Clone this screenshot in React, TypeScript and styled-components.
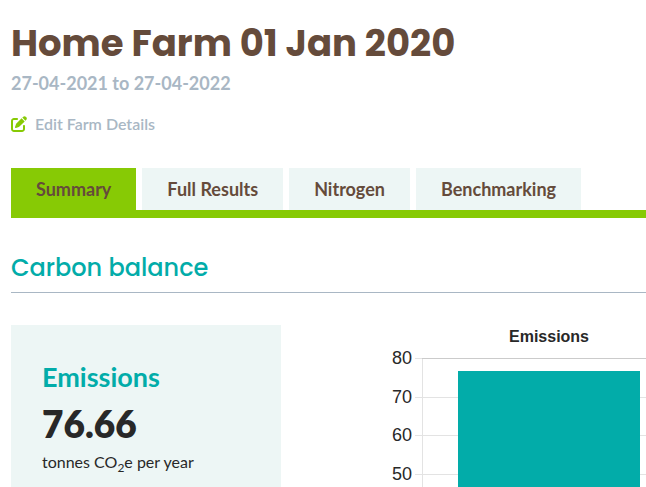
import React from "react";
import styled, { createGlobalStyle } from "styled-components";
import { FaPenToSquare } from "react-icons/fa6";

const color = {
  brown: "#654b3b",
  slate: "#a9b7c4",
  lime: "#87ca05",
  teal: "#02aca9",
  mist: "#edf6f5",
  ink: "#282828",
};

const bodyFont = `"Proxima Nova", Lato, sans-serif`;
const headingFont = `Poppins, Inter, sans-serif`;

const GlobalStyle = createGlobalStyle`
  *, *::before, *::after { box-sizing: border-box; }
  body {
    margin: 0;
    background: #fff;
    color: ${color.ink};
    font-family: ${bodyFont};
  }
  h1, h2, h3, p { margin: 0; }
`;

const Page = styled.main`
  display: flex;
  flex-direction: column;
  height: 100vh;
  padding: 20px 0 0 11px;
  overflow: hidden;
`;

const Title = styled.h1`
  font: 700 37px/46px ${headingFont};
  color: ${color.brown};
`;

const Period = styled.p`
  margin-top: 5px;
  font-size: 18px;
  line-height: 24px;
  font-weight: 700;
  color: ${color.slate};
`;

const EditLink = styled.a`
  display: inline-flex;
  align-items: center;
  align-self: flex-start;
  gap: 8px;
  margin-top: 17px;
  font-size: 16px;
  line-height: 24px;
  font-weight: 600;
  color: ${color.slate};
  text-decoration: none;

  svg {
    color: ${color.lime};
  }
`;

const Tabs = styled.nav`
  display: flex;
  gap: 6px;
  margin-top: 32px;
  border-bottom: 8px solid ${color.lime};
`;

const Tab = styled.button<{ $active?: boolean }>`
  height: 42px;
  padding: 0 25px;
  border: 0;
  background: ${(p) => (p.$active ? color.lime : color.mist)};
  color: ${color.brown};
  font: 700 18px/24px ${bodyFont};
  white-space: nowrap;
  cursor: pointer;
`;

const SectionTitle = styled.h2`
  margin-top: 32px;
  padding-bottom: 6px;
  border-bottom: 1px solid ${color.slate};
  font: 500 24px/36px ${headingFont};
  color: ${color.teal};
`;

const Results = styled.section`
  display: flex;
  flex: 1;
  align-items: stretch;
  gap: 110px;
  min-height: 0;
  margin-top: 32px;
`;

const Card = styled.article`
  flex: 0 0 270px;
  padding: 36px 31px 0;
  background: ${color.mist};
`;

const CardTitle = styled.h3`
  font-size: 27px;
  line-height: 32px;
  font-weight: 700;
  color: ${color.teal};
`;

const Figure = styled.p`
  margin-top: 8px;
  font-size: 37px;
  line-height: 46px;
  font-weight: 800;
`;

const Unit = styled.p`
  margin-top: 3px;
  font-size: 16px;
  line-height: 24px;

  sub {
    font-size: 12px;
    line-height: 0;
  }
`;

const Chart = styled.svg`
  flex: none;
  width: 296px;
  height: 100%;
  font-family: "Liberation Sans", Arial, sans-serif;
  fill: ${color.ink};
`;

const tabs = ["Summary", "Full Results", "Nitrogen", "Benchmarking"];
const ticks = [80, 70, 60, 50];

const plot = { left: 31, right: 285, top: 33, height: 309 };
const yOf = (value: number) =>
  plot.top + Math.round(((80 - value) / 80) * plot.height);

function EmissionsChart({ value }: { value: number }) {
  const middle = (plot.left + plot.right) / 2;
  const bottom = yOf(0);
  return (
    <Chart role="img" aria-label="Emissions chart">
      <text x={middle} y="17" textAnchor="middle" fontSize="16" fontWeight="700">
        Emissions
      </text>
      <g shapeRendering="crispEdges">
        {ticks.map((t) => (
          <rect
            key={t}
            x={plot.left - 7}
            y={yOf(t)}
            width={plot.right - plot.left + 7}
            height="1"
            fill="#e3e3e3"
          />
        ))}
        <rect x={plot.left} y={plot.top} width="1" height={plot.height} fill="#e3e3e3" />
        <rect x={plot.left} y={plot.top} width={plot.right - plot.left} height="1" fill="#cbcbcb" />
        <rect x="67" y={yOf(value)} width="182" height={bottom - yOf(value)} fill={color.teal} />
      </g>
      {ticks.map((t) => (
        <text key={t} x="21" y={yOf(t) + 6} textAnchor="end" fontSize="18">
          {t}
        </text>
      ))}
    </Chart>
  );
}

export default function App() {
  return (
    <>
      <GlobalStyle />
      <Page>
        <Title>Home Farm 01 Jan 2020</Title>
        <Period>27-04-2021 to 27-04-2022</Period>
        <EditLink href="#edit">
          <FaPenToSquare size={16} aria-hidden />
          Edit Farm Details
        </EditLink>
        <Tabs>
          {tabs.map((label, i) => (
            <Tab key={label} type="button" $active={i === 0}>
              {label}
            </Tab>
          ))}
        </Tabs>
        <SectionTitle>Carbon balance</SectionTitle>
        <Results>
          <Card>
            <CardTitle>Emissions</CardTitle>
            <Figure>76.66</Figure>
            <Unit>
              tonnes CO<sub>2</sub>e per year
            </Unit>
          </Card>
          <EmissionsChart value={76.66} />
        </Results>
      </Page>
    </>
  );
}
